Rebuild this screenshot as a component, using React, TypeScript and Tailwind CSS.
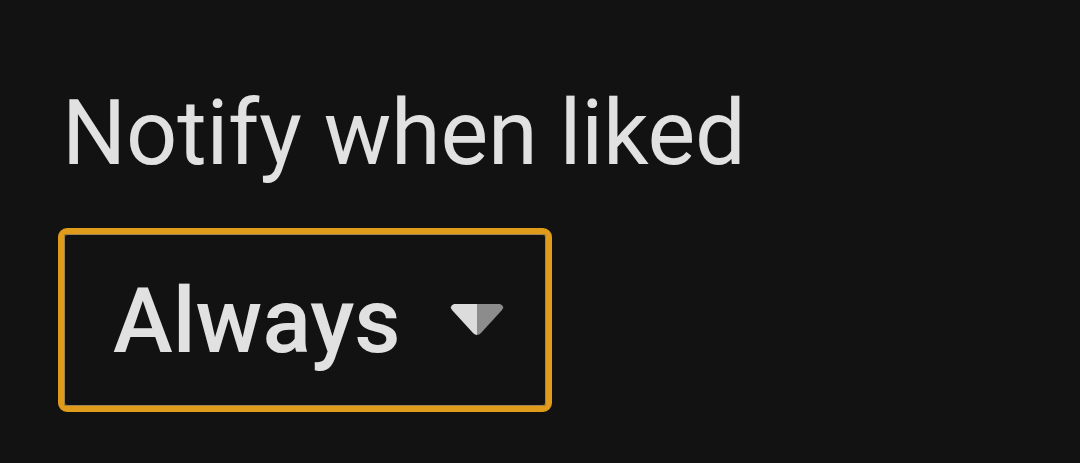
export default function App() {
  return (
    <div
      className="w-[1080px] h-[463px] bg-[#121212] pl-[58px] pt-[88px]"
      style={{ fontFamily: 'Roboto, "Noto Sans", sans-serif' }}
    >
      <div className="text-[90px] leading-[91px] tracking-[-0.2px] text-[#e1e1e1] pl-[4px]">Notify when liked</div>
      <div className="mt-[49px] w-[494px] h-[184px] border-[6px] border-[#e09b1a] rounded-[9px] shadow-[inset_0_0_0_1px_#9c8455] flex items-center pl-[49px]">
        <span className="text-[90px] leading-[90px] font-medium text-[#e1e1e1] mt-[4px]">Always</span>
        <svg className="ml-[49px] mt-[-1px]" width="54" height="33" viewBox="0 0 54 33">
          <path d="M4 1 L27 1 L27 32 Q25 32 23 30 L2 7 Q-1 3 4 1 Z" fill="#dcdcdc" />
          <path d="M27 1 L50 1 Q55 3 52 7 L31 30 Q29 32 27 32 Z" fill="#8c8c8c" />
        </svg>
      </div>
    </div>
  );
}
